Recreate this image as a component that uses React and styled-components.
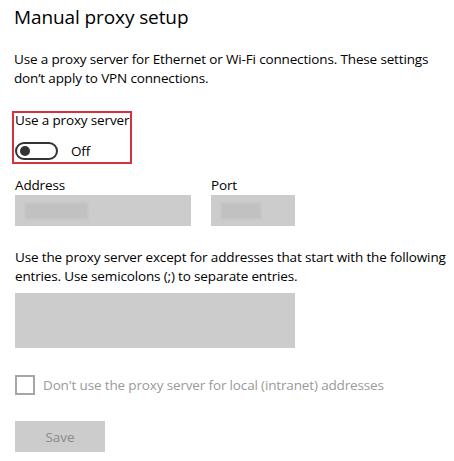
import React from "react";
import styled, { createGlobalStyle } from "styled-components";

const Global = createGlobalStyle`
  html, body { margin: 0; padding: 0; background: #ffffff; }
  body { font-family: "Open Sans", "Noto Sans", sans-serif; color: #000; }
`;

const Page = styled.div`
  width: 454px;
  height: 461px;
  box-sizing: border-box;
  padding: 0 0 0 14px;
  overflow: hidden;
`;

const Title = styled.h1`
  margin: 0;
  padding-top: 3px;
  font-size: 19px;
  font-weight: 400;
  line-height: 28px;
  letter-spacing: -0.1px;
`;

const Para = styled.p`
  margin: ${(p) => p.$mt || 0}px 0 0 ${(p) => p.$ml || 0}px;
  font-size: 13.5px;
  line-height: 19px;
  letter-spacing: -0.15px;
  white-space: nowrap;
`;

const Highlight = styled.div`
  margin: 23px 0 0 -2px;
  width: 120px;
  height: 53px;
  box-sizing: border-box;
  border: 2px solid #d8303d;
  padding: 0 0 0 1px;
`;

const Label = styled.div`
  font-size: 13.5px;
  line-height: ${(p) => p.$lh || 19}px;
  letter-spacing: -0.15px;
`;

const ToggleRow = styled.div`
  display: flex;
  align-items: center;
  gap: 13px;
  margin-top: 14px;
  height: 18px;
`;

const Toggle = styled.div`
  width: 43px;
  height: 18px;
  box-sizing: border-box;
  border: 2px solid #333;
  border-radius: 9px;
  display: flex;
  align-items: center;
  padding-left: 3px;
`;

const Knob = styled.span`
  width: 10px;
  height: 10px;
  border-radius: 50%;
  background: #333;
`;

const FieldRow = styled.div`
  display: flex;
  gap: 20px;
  margin-top: 12px;
  margin-left: 1px;
`;

const Field = styled.div`
  display: flex;
  flex-direction: column;
`;

const Input = styled.div`
  width: ${(p) => p.$w}px;
  height: ${(p) => p.$h || 31}px;
  margin-top: ${(p) => p.$mt || 0}px;
  margin-left: ${(p) => p.$ml || 0}px;
  background: #cccccc;
  display: flex;
  align-items: center;
  padding-left: 10px;
  box-sizing: border-box;
`;

const Blur = styled.span`
  width: ${(p) => p.$w}px;
  height: 16px;
  background: #c1c1c1;
  filter: blur(1px);
`;

const Check = styled.label`
  display: flex;
  align-items: center;
  gap: 8px;
  margin: 27px 0 0 1px;
  color: #9a9a9a;
  font-size: 13.5px;
  letter-spacing: -0.15px;
`;

const Box = styled.span`
  width: 20px;
  height: 20px;
  box-sizing: border-box;
  border: 2px solid #a6a6a6;
`;

const Button = styled.button`
  display: block;
  margin: 26px 0 0 1px;
  width: 90px;
  height: 31px;
  border: none;
  background: #cccccc;
  color: #8a8a8a;
  font-family: inherit;
  font-size: 13.5px;
  padding: 0;
`;

export default function App() {
  return (
    <Page>
      <Global />
      <Title>Manual proxy setup</Title>
      <Para $mt={19}>
        Use a proxy server for Ethernet or Wi-Fi connections. These settings
        <br />
        don’t apply to VPN connections.
      </Para>
      <Highlight>
        <Label $lh={15}>Use a proxy server</Label>
        <ToggleRow>
          <Toggle>
            <Knob />
          </Toggle>
          <Label>Off</Label>
        </ToggleRow>
      </Highlight>
      <FieldRow>
        <Field>
          <Label>Address</Label>
          <Input $w={176}>
            <Blur $w={63} />
          </Input>
        </Field>
        <Field>
          <Label>Port</Label>
          <Input $w={84}>
            <Blur $w={40} />
          </Input>
        </Field>
      </FieldRow>
      <Para $mt={22} $ml={1}>
        Use the proxy server except for addresses that start with the following
        <br />
        entries. Use semicolons (;) to separate entries.
      </Para>
      <Input $w={280} $h={55} $mt={7} $ml={1} />
      <Check>
        <Box />
        Don't use the proxy server for local (intranet) addresses
      </Check>
      <Button>Save</Button>
    </Page>
  );
}
